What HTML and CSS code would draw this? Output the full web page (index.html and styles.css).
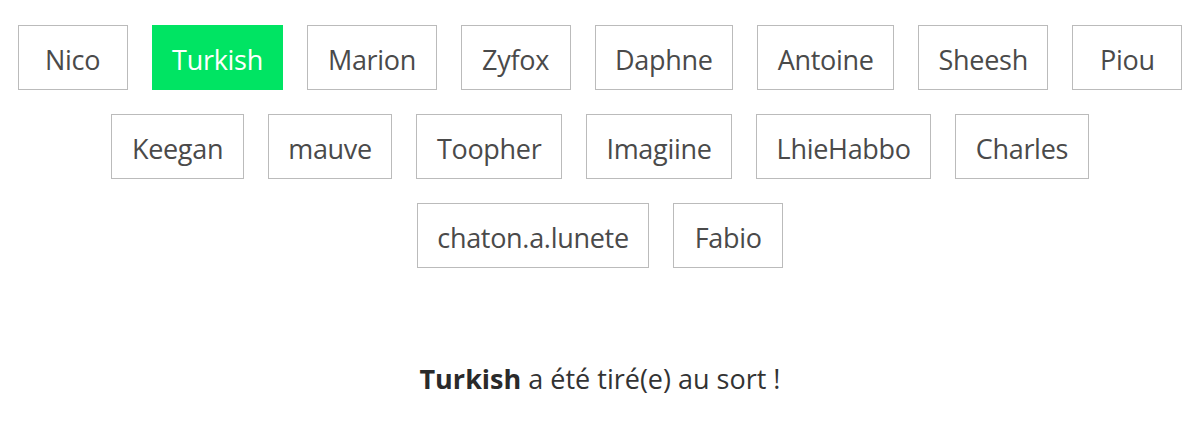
FILE: index.html
```html
<!DOCTYPE html>
<html>

<head>
    <title>Tirage au sort</title>
    <link rel="stylesheet" href="styles.css">
</head>

<body>
    <div class="names">
        <button class="name">Nico</button>
        <button class="name picked">Turkish</button>
        <button class="name">Marion</button>
        <button class="name">Zyfox</button>
        <button class="name">Daphne</button>
        <button class="name">Antoine</button>
        <button class="name">Sheesh</button>
        <button class="name">Piou</button>
        <button class="name">Keegan</button>
        <button class="name">mauve</button>
        <button class="name">Toopher</button>
        <button class="name">Imagiine</button>
        <button class="name">LhieHabbo</button>
        <button class="name">Charles</button>
        <button class="name">chaton.a.lunete</button>
        <button class="name">Fabio</button>
    </div>
    <p class="result"><strong>Turkish</strong> a été tiré(e) au sort !</p>
</body>

</html>
```

FILE: styles.css
```css
* {
    margin: 0;
    padding: 0;
    box-sizing: border-box;
}

body {
    font-family: "Open Sans", "Noto Sans", sans-serif;
    background: white;
    color: #333;
}

.names {
    display: flex;
    flex-wrap: wrap;
    justify-content: center;
    padding-top: 13px;
}

.name {
    margin: 12px;
    height: 65px;
    min-width: 110px;
    padding: 4px 19.5px 0;
    font-family: inherit;
    font-size: 27px;
    letter-spacing: -0.3px;
    color: #4a4a4a;
    background: white;
    border: 1px solid #bbb;
    cursor: pointer;
}

.name.picked {
    background: #00e463;
    border-color: #00e463;
    color: white;
}

.result {
    margin-top: 80px;
    text-align: center;
    font-size: 27px;
    color: #333;
}

.result strong {
    font-weight: 700;
    color: #2a2a2a;
}
```
